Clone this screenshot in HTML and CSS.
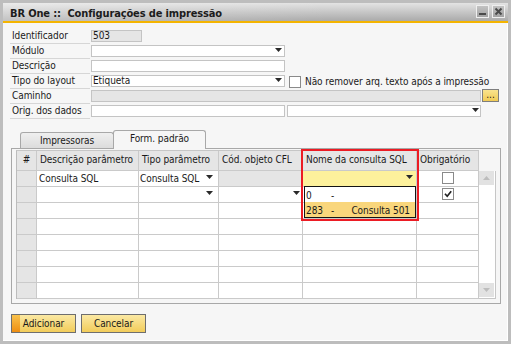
FILE: index.html
```html
<!DOCTYPE html>
<html lang="pt">
<head>
<meta charset="utf-8">
<title>Configurações de impressão</title>
<link rel="stylesheet" href="styles.css">
</head>
<body>
<div class="window">
  <div class="titlebar">
    <span class="title">BR One ::&nbsp; Configurações de impressão</span>
    <div class="wbtns">
      <span class="wbtn"><svg width="11" height="11" viewBox="0 0 11 11"><rect x="2" y="7" width="7" height="2" fill="#4a4a4a"/></svg></span>
      <span class="wbtn"><svg width="11" height="11" viewBox="0 0 11 11"><path d="M2.5 2.5 L8.5 8.5 M8.5 2.5 L2.5 8.5" stroke="#4a4a4a" stroke-width="2"/></svg></span>
    </div>
  </div>
  <div class="accent"></div>
  <div class="content">
    <div class="form">
      <div class="frow"><span class="label">Identificador</span><span class="field ro w50">503</span></div>
      <div class="frow"><span class="label">Módulo</span><span class="field w194"><span></span><svg class="arrow" width="7" height="4" viewBox="0 0 7 4"><polygon points="0,0 7,0 3.5,4" fill="#2a2a2a"/></svg></span></div>
      <div class="frow"><span class="label">Descrição</span><span class="field w194"></span></div>
      <div class="frow"><span class="label">Tipo do layout</span><span class="field w194"><span>Etiqueta</span><svg class="arrow" width="7" height="4" viewBox="0 0 7 4"><polygon points="0,0 7,0 3.5,4" fill="#2a2a2a"/></svg></span><span class="check"></span><span class="checktext">Não remover arq. texto após a impressão</span></div>
      <div class="frow"><span class="label">Caminho</span><span class="field ro w390"></span><span class="dots">...</span></div>
      <div class="frow"><span class="label">Orig. dos dados</span><span class="field w194"></span><span class="field w194 second"><span></span><svg class="arrow a2" width="7" height="4" viewBox="0 0 7 4"><polygon points="0,0 7,0 3.5,4" fill="#2a2a2a"/></svg></span></div>
    </div>

    <div class="tabs">
      <span class="tab">Impressoras</span>
      <span class="tab active">Form. padrão</span>
    </div>

    <div class="panel">
      <div class="gridwrap">
        <div class="grid">
          <div class="hc num">#</div>
          <div class="hc">Descrição parâmetro</div>
          <div class="hc">Tipo parâmetro</div>
          <div class="hc">Cód. objeto CFL</div>
          <div class="hc">Nome da consulta SQL</div>
          <div class="hc">Obrigatório</div>

          <div class="c num"></div>
          <div class="c txt">Consulta SQL</div>
          <div class="c combo t"><span class="tipo">Consulta SQL</span><svg width="7" height="4" viewBox="0 0 7 4"><polygon points="0,0 7,0 3.5,4" fill="#2a2a2a"/></svg></div>
          <div class="c gray"></div>
          <div class="c combo n yellow"><span></span><svg width="7" height="4" viewBox="0 0 7 4"><polygon points="0,0 7,0 3.5,4" fill="#2a2a2a"/></svg></div>
          <div class="c center"><span class="check"></span></div>

          <div class="c num"></div>
          <div class="c"></div>
          <div class="c combo t"><span></span><svg width="7" height="4" viewBox="0 0 7 4"><polygon points="0,0 7,0 3.5,4" fill="#2a2a2a"/></svg></div>
          <div class="c combo k"><span></span><svg width="7" height="4" viewBox="0 0 7 4"><polygon points="0,0 7,0 3.5,4" fill="#2a2a2a"/></svg></div>
          <div class="c"></div>
          <div class="c center"><span class="check on"><svg width="10" height="10" viewBox="0 0 10 10"><path d="M2 4.8 L4.2 7.2 L8.2 2.2" fill="none" stroke="#222" stroke-width="1.7"/></svg></span></div>

          <div class="c num"></div><div class="c"></div><div class="c"></div><div class="c"></div><div class="c"></div><div class="c"></div>
          <div class="c num"></div><div class="c"></div><div class="c"></div><div class="c"></div><div class="c"></div><div class="c"></div>
          <div class="c num"></div><div class="c"></div><div class="c"></div><div class="c"></div><div class="c"></div><div class="c"></div>
          <div class="c num"></div><div class="c"></div><div class="c"></div><div class="c"></div><div class="c"></div><div class="c"></div>
          <div class="c num"></div><div class="c"></div><div class="c"></div><div class="c"></div><div class="c"></div><div class="c"></div>
          <div class="c num"></div><div class="c"></div><div class="c"></div><div class="c"></div><div class="c"></div><div class="c"></div>
        </div>
        <div class="vscroll">
          <span class="sbtn"><svg width="7" height="4" viewBox="0 0 7 4"><polygon points="0,4 7,4 3.5,0" fill="#bdbdbd"/></svg></span>
          <span class="sbtn"><svg width="7" height="4" viewBox="0 0 7 4"><polygon points="0,0 7,0 3.5,4" fill="#bdbdbd"/></svg></span>
        </div>
        <div class="highlight"></div>
        <div class="popup">
          <div class="item"><span>0</span><span>-</span><span></span></div>
          <div class="item sel"><span>283</span><span>-</span><span class="name">Consulta 501</span></div>
        </div>
      </div>
    </div>

    <div class="actions">
      <span class="btn default">Adicionar</span>
      <span class="btn">Cancelar</span>
    </div>
  </div>
</div>
</body>
</html>
```
FILE: styles.css
```css
html, body {
  margin: 0;
  padding: 0;
}
body {
  font-family: "DejaVu Sans Condensed", "DejaVu Sans", sans-serif;
  font-stretch: condensed;
  font-size: 10px;
  letter-spacing: -0.07px;
  color: #1a1a1a;
  background: #f6f6f6;
}
.window {
  width: 511px;
  height: 344px;
  box-sizing: border-box;
  border: 3px solid #bdbdbd;
  background: #f6f6f6;
  display: flex;
  flex-direction: column;
  box-shadow: inset -1px -1px 0 #ffffff;
}
.titlebar {
  height: 18px;
  flex: none;
  display: flex;
  justify-content: space-between;
  padding: 0 3px 0 7px;
  background:
    linear-gradient(to right, rgba(255,255,255,0.28), rgba(255,255,255,0) 65%),
    linear-gradient(#e3e3e3, #aaaaaa);
}
.title {
  font-weight: bold;
  font-size: 11px;
  letter-spacing: -0.14px;
  line-height: 14px;
  padding-top: 4px;
  color: #1c1c1c;
  white-space: nowrap;
}
.wbtns {
  display: flex;
  gap: 3px;
  padding-top: 2px;
}
.wbtn {
  width: 13px;
  height: 13px;
  box-sizing: border-box;
  border: 1px solid #efefef;
  background: linear-gradient(#c2c2c2, #a2a2a2);
  display: flex;
}
.accent {
  height: 2px;
  flex: none;
  background: #f4b400;
}
.content {
  flex: 1;
  padding: 6px 0 0 7px;
  display: flex;
  flex-direction: column;
}
.frow {
  display: flex;
  height: 15px;
}
.label {
  width: 80px;
  height: 15px;
  box-sizing: border-box;
  border-bottom: 1px solid #d6d6d6;
  padding-left: 2px;
  line-height: 14px;
  white-space: nowrap;
}
.field {
  margin-left: 1px;
  margin-top: 1px;
  height: 12px;
  box-sizing: border-box;
  border: 1px solid #c4c4c4;
  background: #ffffff;
  line-height: 10px;
  padding-left: 1px;
  display: flex;
  justify-content: space-between;
}
.field.second { margin-left: 2px; }
.ro { background: #e5e5e5; }
.w50 { width: 51px; }
.w194 { width: 194px; }
.w390 { width: 390px; }
.arrow {
  margin-top: 2px;
  margin-right: 2px;
}
.arrow.a2 { margin-right: 1px; }
.check {
  width: 12px;
  height: 12px;
  box-sizing: border-box;
  border: 1px solid #8a8a8a;
  background: #ffffff;
  display: flex;
  align-items: center;
  justify-content: center;
}
.frow > .check {
  margin-left: 4px;
  margin-top: 2px;
}
.checktext {
  margin-left: 4px;
  line-height: 14px;
  padding-top: 1px;
  white-space: nowrap;
}
.dots {
  margin-left: 1px;
  width: 17px;
  height: 13px;
  box-sizing: border-box;
  border: 1px solid #7e7e7e;
  background: linear-gradient(#f9e38e, #f1cb55);
  text-align: center;
  line-height: 9px;
  font-size: 10px;
}
.tabs {
  display: flex;
  align-items: flex-end;
  height: 18px;
  margin-top: 11px;
  padding-left: 10px;
}
.tab {
  width: 94px;
  height: 16px;
  box-sizing: border-box;
  border: 1px solid #a8a8a8;
  border-bottom: none;
  border-radius: 3px 3px 0 0;
  background: linear-gradient(#efefef, #dcdcdc);
  text-align: center;
  line-height: 14px;
  padding-top: 1px;
  white-space: nowrap;
}
.tab.active {
  width: 93px;
  height: 19px;
  margin-left: -1px;
  margin-bottom: -1px;
  background: #f6f6f6;
  position: relative;
  z-index: 1;
}
.panel {
  margin-left: 1px;
  width: 490px;
  height: 156px;
  box-sizing: border-box;
  border: 1px solid #a8a8a8;
  padding: 1px 4px 4px 4px;
  background: #f6f6f6;
}
.gridwrap {
  position: relative;
  display: flex;
  align-items: flex-start;
}
.grid {
  display: grid;
  grid-template-columns: 20px 102px 80px 84px 114px 62px;
  grid-template-rows: 20px repeat(8, 16px);
  border-left: 1px solid #bcbcbc;
  border-top: 1px solid #c6c6c6;
  background: #ffffff;
}
.hc, .c {
  box-sizing: border-box;
  border-right: 1px solid #cacaca;
  border-bottom: 1px solid #cacaca;
  white-space: nowrap;
  overflow: hidden;
}
.hc {
  background: #e5e5e5;
  padding: 2px 0 0 3px;
  line-height: 14px;
}
.hc.num {
  padding-left: 0;
  text-align: center;
}
.c {
  line-height: 15px;
}
.c.num { background: #e5e5e5; }
.c.gray { background: #e5e5e5; }
.c.yellow { background: #fdf19c; }
.c.txt { padding-left: 2px; }
.c.combo {
  display: flex;
  justify-content: space-between;
  align-items: flex-start;
}
.c.combo svg { margin-top: 4px; }
.c.combo.t { padding-left: 1px; padding-right: 5px; }
.c.combo.k { padding-right: 2px; }
.c.combo.n { padding-right: 3px; }
.c.center {
  display: flex;
  justify-content: center;
  padding-top: 1px;
}
.vscroll {
  margin-top: 21px;
  width: 17px;
  height: 128px;
  box-sizing: border-box;
  border-right: 1px solid #c6c6c6;
  border-bottom: 1px solid #c6c6c6;
  background: #ffffff;
  display: flex;
  flex-direction: column;
  justify-content: space-between;
  padding-bottom: 1px;
}
.sbtn {
  width: 15px;
  height: 14px;
  background: #e2e2e2;
  display: flex;
  align-items: center;
  justify-content: center;
}
.highlight {
  position: absolute;
  left: 285px;
  top: -1px;
  width: 118px;
  height: 72px;
  box-sizing: border-box;
  border: 2px solid #ec1c24;
  z-index: 2;
}
.popup {
  position: absolute;
  left: 288px;
  top: 36px;
  width: 112px;
  box-sizing: border-box;
  border: 1px solid #141414;
  background: #ffffff;
  z-index: 3;
}
.item {
  display: grid;
  grid-template-columns: 25px 20px 1fr;
  height: 15px;
  box-sizing: border-box;
  padding: 2px 0 0 1px;
  line-height: 13px;
  white-space: nowrap;
}
.item.sel { background: #f9d67c; }
.item .name {
  text-align: right;
  padding-right: 5px;
}
.actions {
  display: flex;
  gap: 5px;
  margin-top: 10px;
  margin-left: 1px;
}
.btn {
  width: 65px;
  height: 19px;
  box-sizing: border-box;
  border: 1px solid #6e6e6e;
  background: linear-gradient(#fbe9a4, #f2cc5a);
  text-align: center;
  line-height: 17px;
  white-space: nowrap;
}
.btn.default {
  background:
    linear-gradient(#f9c24c, #ee8e12) no-repeat 0 0 / 8px 100%,
    linear-gradient(#fbe9a4, #f2cc5a);
}
```
